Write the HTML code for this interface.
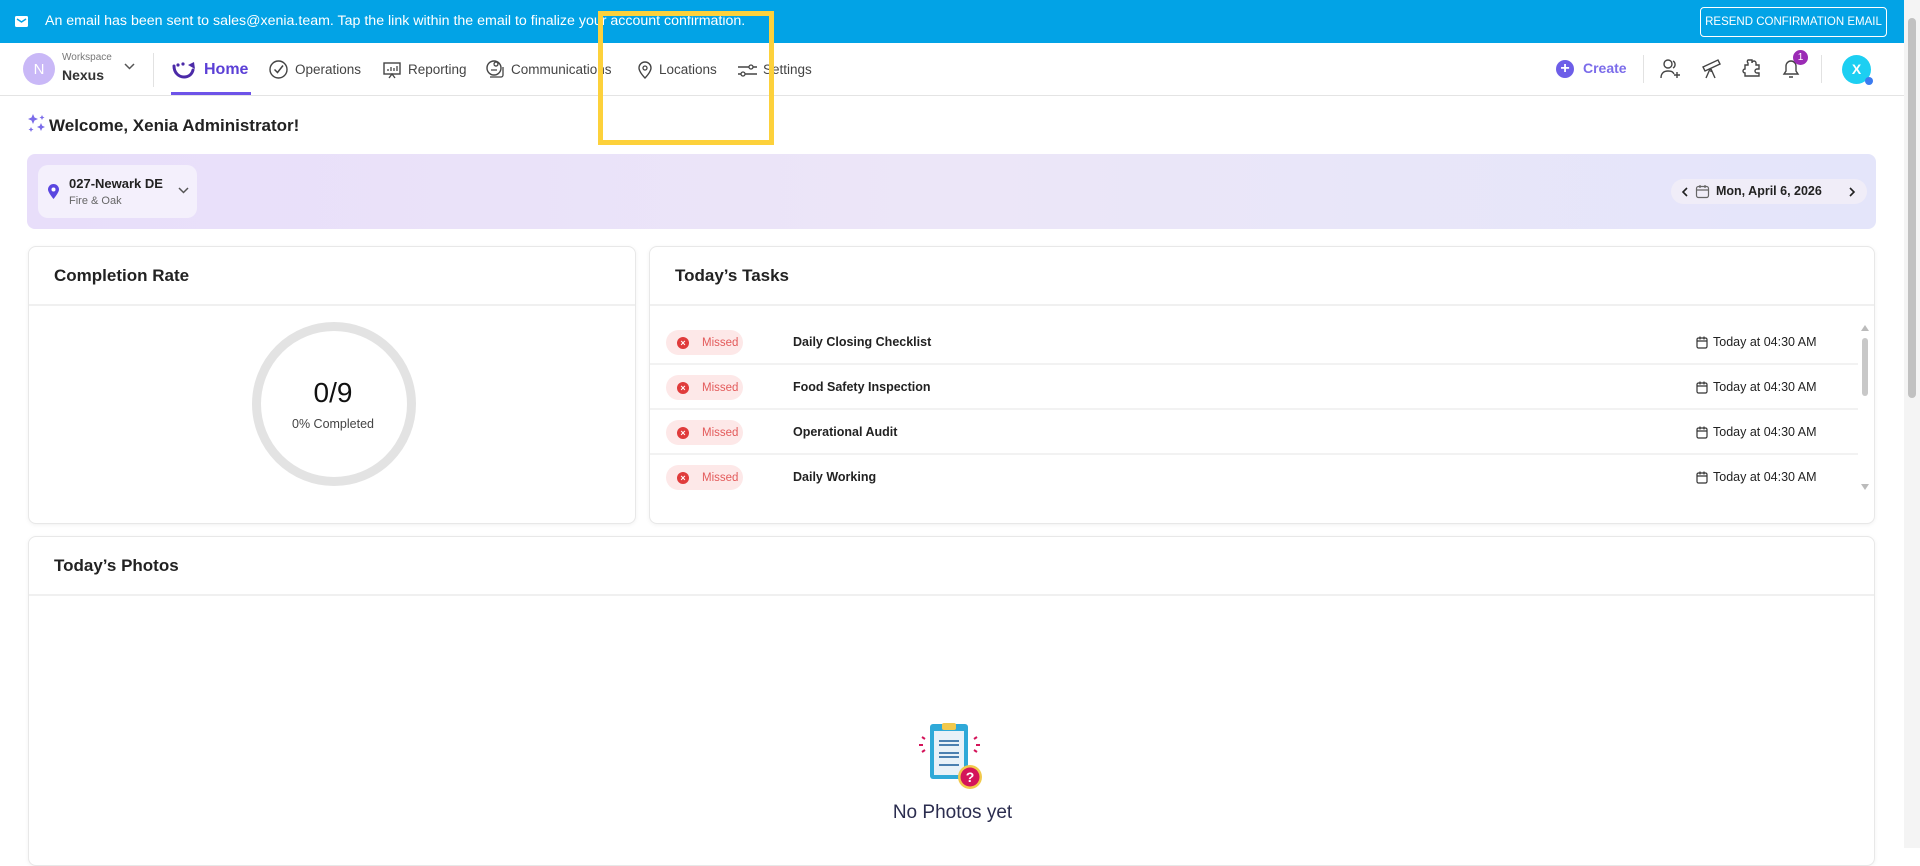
<!DOCTYPE html>
<html><head><meta charset="utf-8"><style>
*{box-sizing:border-box;margin:0;padding:0}
body{width:1920px;height:848px;overflow:hidden;background:#fff;font-family:"Liberation Sans",sans-serif;color:#222;position:relative}
.abs{position:absolute}
.banner{left:0;top:0;width:1904px;height:43px;background:#02a3e6;color:#fff;font-size:14.5px}
.nav{left:0;top:43px;width:1904px;height:53px;border-bottom:1px solid #e4e4e4;background:#fff}
.ni{position:absolute;top:0;height:53px;display:flex;align-items:center;font-size:13.5px;color:#444}
.card{position:absolute;background:#fff;border:1px solid #e8e8e8;border-radius:8px;box-shadow:0 1px 4px rgba(0,0,0,.06)}
.ch{height:59px;border-bottom:2px solid #f0f0f0;padding-left:25px;display:flex;align-items:center;font-size:17px;font-weight:bold;color:#222}
.row{position:absolute;left:0;width:1208px;height:45px;border-bottom:2px solid #f2f2f2}
.pill{position:absolute;left:16px;top:10px;width:77px;height:25px;background:#fde8e8;border-radius:13px;font-size:11.5px;color:#e35b5b;display:flex;align-items:center;padding-left:11px}
.pill i{width:12px;height:12px;border-radius:50%;background:#e03b3b;margin-right:13px;display:inline-block;color:#fff;font-style:normal;font-size:9px;line-height:12px;text-align:center;font-weight:bold}
.tn{position:absolute;left:143px;top:15px;font-size:12.5px;font-weight:bold;color:#222}
.td{position:absolute;left:1046px;top:15px;font-size:12.5px;color:#222;display:flex;align-items:center}
.td svg{margin-right:5px}
</style></head><body>
<div class="abs banner">
 <svg class="abs" style="left:15px;top:16px" width="13" height="11" viewBox="0 0 13 11"><rect width="13" height="11" rx="1.5" fill="#fff"/><path d="M2 3l4.5 3L11 3" stroke="#02a3e6" stroke-width="1.5" fill="none"/></svg>
 <div class="abs" style="left:45px;top:13px;font-size:14.2px">An email has been sent to sales@xenia.team. Tap the link within the email to finalize your account confirmation.</div>
 <div class="abs" style="left:1700px;top:7px;width:187px;height:30px;border:1px solid #fff;border-radius:4px;font-size:11.5px;display:flex;align-items:center;justify-content:center">RESEND CONFIRMATION EMAIL</div>
</div>
<div class="abs nav">
 <div class="abs" style="left:23px;top:10px;width:32px;height:32px;border-radius:50%;background:#c9b8f7;color:#fff;font-size:15px;display:flex;align-items:center;justify-content:center">N</div>
 <div class="abs" style="left:62px;top:9px;font-size:10px;color:#777">Workspace</div>
 <div class="abs" style="left:62px;top:24px;font-size:14px;font-weight:bold;color:#333">Nexus</div>
 <svg class="abs" style="left:124px;top:20px" width="11" height="8"><path d="M1 1l4.5 4.5L10 1" stroke="#555" stroke-width="1.5" fill="none"/></svg>
 <div class="abs" style="left:153px;top:10px;width:1px;height:34px;background:#e2e2e2"></div>
 <div class="ni" style="left:171px;color:#5b3fd6;font-size:16px;font-weight:bold"><svg width="28" height="20" viewBox="0 0 28 20" style="margin-right:5px"><path d="M3 6c0 7 5 11 10 11s8-3 9-7" stroke="#4b2aa8" stroke-width="3" fill="none" stroke-linecap="round"/><path d="M17 5l6-3 1 7" fill="#4b2aa8"/><circle cx="7" cy="5" r="1.6" fill="#4b2aa8"/><circle cx="12" cy="4" r="1.6" fill="#4b2aa8"/></svg>Home</div>
 <div class="abs" style="left:171px;top:49px;width:80px;height:3px;background:#6d53e8"></div>
 <div class="ni" style="left:268px"><svg width="21" height="21" viewBox="0 0 21 21" style="margin-right:6px"><circle cx="10.5" cy="10.5" r="8.5" stroke="#444" stroke-width="1.4" fill="none"/><path d="M6.5 10.5l3 3 5.5-7" stroke="#444" stroke-width="1.5" fill="none"/></svg>Operations</div>
 <div class="ni" style="left:382px"><svg width="20" height="20" viewBox="0 0 20 20" style="margin-right:6px"><rect x="2" y="3" width="16" height="11" stroke="#444" stroke-width="1.4" fill="none"/><path d="M6 11V9M9 11V7M12 11V8M15 11V6M7 18l3-4 3 4" stroke="#444" stroke-width="1.3" fill="none"/></svg>Reporting</div>
 <div class="ni" style="left:485px"><svg width="21" height="21" viewBox="0 0 21 21" style="margin-right:5px"><circle cx="9" cy="9" r="7" stroke="#444" stroke-width="1.4" fill="none"/><path d="M6 11h6M9 5a2 2 0 1 1 0 .1M5 18h11a2 2 0 0 0 2-2V8" stroke="#444" stroke-width="1.3" fill="none"/></svg>Communications</div>
 <div class="ni" style="left:636px"><svg width="18" height="20" viewBox="0 0 18 20" style="margin-right:5px"><path d="M9 18s-6-6-6-10a6 6 0 0 1 12 0c0 4-6 10-6 10z" stroke="#444" stroke-width="1.4" fill="none"/><circle cx="9" cy="8" r="2" stroke="#444" stroke-width="1.3" fill="none"/></svg>Locations</div>
 <div class="ni" style="left:737px"><svg width="21" height="18" viewBox="0 0 21 18" style="margin-right:5px"><path d="M1 6h11M16 6h4M1 13h3M8 13h12" stroke="#444" stroke-width="1.4"/><circle cx="14" cy="6" r="2" stroke="#444" stroke-width="1.3" fill="none"/><circle cx="6" cy="13" r="2" stroke="#444" stroke-width="1.3" fill="none"/></svg>Settings</div>
 <div class="abs" style="left:1556px;top:17px;width:18px;height:18px;border-radius:50%;background:#6d5ee8;color:#fff;font-size:16px;line-height:17px;text-align:center;font-weight:bold">+</div>
 <div class="abs" style="left:1583px;top:17px;font-size:14px;font-weight:bold;color:#7b6cea">Create</div>
 <div class="abs" style="left:1643px;top:12px;width:1px;height:28px;background:#e2e2e2"></div>
 <svg class="abs" style="left:1660px;top:15px" width="22" height="22" viewBox="0 0 22 22"><circle cx="8" cy="6" r="4" stroke="#444" stroke-width="1.4" fill="none"/><path d="M13 3a4 4 0 0 1 0 7M1 20c0-5 3-7 7-7s5 1 6 3M17 14v6M14 17h6" stroke="#444" stroke-width="1.4" fill="none"/></svg>
 <svg class="abs" style="left:1701px;top:14px" width="22" height="22" viewBox="0 0 22 22"><path d="M2 10l15-7 2 4-15 7zM9 12l-4 9M10 12l4 9M10 12v3" stroke="#444" stroke-width="1.4" fill="none"/></svg>
 <svg class="abs" style="left:1740px;top:14px" width="22" height="22" viewBox="0 0 22 22"><path d="M8 3h4v3a2 2 0 1 1 4 0V8h3v4h-2a2 2 0 1 0 0 4h2v3H5v-3a2 2 0 1 1 0-4V8h3V6a2 2 0 0 1 0-3z" stroke="#444" stroke-width="1.4" fill="none"/></svg>
 <svg class="abs" style="left:1780px;top:14px" width="22" height="24" viewBox="0 0 22 24"><path d="M4 17h14l-2-3V9a5 5 0 0 0-10 0v5zM9 20h4" stroke="#444" stroke-width="1.4" fill="none"/></svg>
 <div class="abs" style="left:1793px;top:7px;width:15px;height:15px;border-radius:50%;background:#9b2bb5;color:#fff;font-size:10px;text-align:center;line-height:15px">1</div>
 <div class="abs" style="left:1821px;top:12px;width:1px;height:28px;background:#e2e2e2"></div>
 <div class="abs" style="left:1842px;top:12px;width:29px;height:29px;border-radius:50%;background:#1dcff2;color:#fff;font-size:14px;font-weight:bold;text-align:center;line-height:29px">X</div>
 <div class="abs" style="left:1865px;top:34px;width:8px;height:8px;border-radius:50%;background:#3b7bf0"></div>
</div>
<svg class="abs" style="left:27px;top:113px" width="22" height="22" viewBox="0 0 22 22"><g fill="#7b6cea"><path d="M6 1l1.5 3.5L11 6 7.5 7.5 6 11 4.5 7.5 1 6l3.5-1.5z"/><path d="M15 2l.8 1.7 1.7.8-1.7.8L15 7l-.8-1.7-1.7-.8 1.7-.8z"/><path d="M4 14l.8 1.7 1.7.8-1.7.8L4 19l-.8-1.7-1.7-.8 1.7-.8z"/><path d="M14 10l1.2 2.8L18 14l-2.8 1.2L14 18l-1.2-2.8L10 14l2.8-1.2z"/></g></svg>
<div class="abs" style="left:49px;top:116px;font-size:17px;font-weight:bold;color:#222">Welcome, Xenia Administrator!</div>
<div class="abs" style="left:27px;top:154px;width:1849px;height:75px;border-radius:8px;background:linear-gradient(90deg,#e8defa,#ece6f8 50%,#e4e5fa)">
 <div class="abs" style="left:11px;top:11px;width:159px;height:53px;border-radius:10px;background:#f4f0fc">
  <svg class="abs" style="left:10px;top:19px" width="11" height="15" viewBox="0 0 11 15"><path d="M5.5 15S0 8.5 0 5.5a5.5 5.5 0 0 1 11 0C11 8.5 5.5 15 5.5 15z" fill="#5a46e0"/><circle cx="5.5" cy="5.5" r="2" fill="#fff"/></svg>
  <div class="abs" style="left:31px;top:11px;font-size:13px;font-weight:bold;color:#222">027-Newark DE</div>
  <div class="abs" style="left:31px;top:30px;font-size:11px;color:#666">Fire &amp; Oak</div>
  <svg class="abs" style="left:140px;top:22px" width="11" height="8"><path d="M1 1l4.5 4.5L10 1" stroke="#555" stroke-width="1.5" fill="none"/></svg>
 </div>
 <div class="abs" style="left:1644px;top:25px;width:196px;height:25px;border-radius:13px;background:#f0edf8;font-size:12.5px;font-weight:bold;color:#222">
  <svg class="abs" style="left:10px;top:8px" width="7" height="10"><path d="M6 1L2 5l4 4" stroke="#222" stroke-width="1.6" fill="none"/></svg>
  <svg class="abs" style="left:24px;top:5px" width="15" height="15" viewBox="0 0 15 15"><rect x="1.5" y="2.5" width="12" height="11" rx="2" stroke="#666" stroke-width="1.2" fill="none"/><path d="M1.5 6h12M5 1v3M10 1v3" stroke="#666" stroke-width="1.2"/></svg>
  <span class="abs" style="left:45px;top:5px">Mon, April 6, 2026</span>
  <svg class="abs" style="left:178px;top:8px" width="7" height="10"><path d="M1 1l4 4-4 4" stroke="#222" stroke-width="1.6" fill="none"/></svg>
 </div>
</div>
<div class="card" style="left:28px;top:246px;width:608px;height:278px">
 <div class="ch">Completion Rate</div>
 <div class="abs" style="left:223px;top:75px;width:164px;height:164px;border-radius:50%;border:9px solid #e3e3e3"></div>
 <div class="abs" style="left:0;width:608px;top:130px;text-align:center;font-size:28px;color:#111">0/9</div>
 <div class="abs" style="left:0;width:608px;top:170px;text-align:center;font-size:12.5px;color:#444">0% Completed</div>
</div>
<div class="card" style="left:649px;top:246px;width:1226px;height:278px;overflow:hidden">
 <div class="ch">Today’s Tasks</div>
 <div class="row" style="top:73px"><div class="pill"><i>×</i>Missed</div><div class="tn">Daily Closing Checklist</div><div class="td"><svg width="12" height="13" viewBox="0 0 12 13"><rect x="1" y="2" width="10" height="10" rx="1.5" stroke="#333" stroke-width="1.2" fill="none"/><path d="M1 5h10M4 0.5v3M8 0.5v3" stroke="#333" stroke-width="1.2"/></svg>Today at 04:30 AM</div></div>
 <div class="row" style="top:118px"><div class="pill"><i>×</i>Missed</div><div class="tn">Food Safety Inspection</div><div class="td"><svg width="12" height="13" viewBox="0 0 12 13"><rect x="1" y="2" width="10" height="10" rx="1.5" stroke="#333" stroke-width="1.2" fill="none"/><path d="M1 5h10M4 0.5v3M8 0.5v3" stroke="#333" stroke-width="1.2"/></svg>Today at 04:30 AM</div></div>
 <div class="row" style="top:163px"><div class="pill"><i>×</i>Missed</div><div class="tn">Operational Audit</div><div class="td"><svg width="12" height="13" viewBox="0 0 12 13"><rect x="1" y="2" width="10" height="10" rx="1.5" stroke="#333" stroke-width="1.2" fill="none"/><path d="M1 5h10M4 0.5v3M8 0.5v3" stroke="#333" stroke-width="1.2"/></svg>Today at 04:30 AM</div></div>
 <div class="row" style="top:208px;border-bottom:none"><div class="pill"><i>×</i>Missed</div><div class="tn">Daily Working</div><div class="td"><svg width="12" height="13" viewBox="0 0 12 13"><rect x="1" y="2" width="10" height="10" rx="1.5" stroke="#333" stroke-width="1.2" fill="none"/><path d="M1 5h10M4 0.5v3M8 0.5v3" stroke="#333" stroke-width="1.2"/></svg>Today at 04:30 AM</div></div>
 <svg class="abs" style="left:1211px;top:78px" width="8" height="6"><path d="M0 6L4 0l4 6z" fill="#bbb"/></svg>
 <div class="abs" style="left:1212px;top:91px;width:6px;height:58px;border-radius:3px;background:#c8c8c8"></div>
 <svg class="abs" style="left:1211px;top:237px" width="8" height="6"><path d="M0 0l4 6 4-6z" fill="#bbb"/></svg>
</div>
<div class="card" style="left:28px;top:536px;width:1847px;height:330px">
 <div class="ch">Today’s Photos</div>
 <svg class="abs" style="left:888px;top:184px" width="70" height="72" viewBox="0 0 70 72"><rect x="13" y="3" width="38" height="55" rx="3" fill="#2fa9d8"/><rect x="17" y="10" width="30" height="44" fill="#e8f1f8"/><rect x="25" y="2" width="14" height="7" rx="2" fill="#f2c94c"/><path d="M22 20h20M22 24h20M22 32h20M22 36h20M22 44h20" stroke="#4a7fb0" stroke-width="2"/><circle cx="53" cy="56" r="12" fill="#f2c94c"/><circle cx="53" cy="56" r="9.5" fill="#d4145a"/><text x="53" y="61" font-size="14" font-weight="bold" fill="#fff" text-anchor="middle" font-family="Liberation Sans">?</text><path d="M5 16l3 2M2 24h4M5 31l3-2M60 16l-3 2M63 24h-4M60 31l-3-2" stroke="#d4145a" stroke-width="2"/></svg>
 <div class="abs" style="left:0;width:1847px;top:265px;text-align:center;font-size:19px;color:#2b2d4f">No Photos yet</div>
</div>
<div class="abs" style="left:1904px;top:0;width:16px;height:848px;background:#f4f4f4"></div>
<div class="abs" style="left:1908px;top:18px;width:8px;height:380px;border-radius:4px;background:#c1c1c1"></div>
<div class="abs" style="left:598px;top:11px;width:176px;height:134px;border:5px solid #fdd13b"></div>
</body></html>
